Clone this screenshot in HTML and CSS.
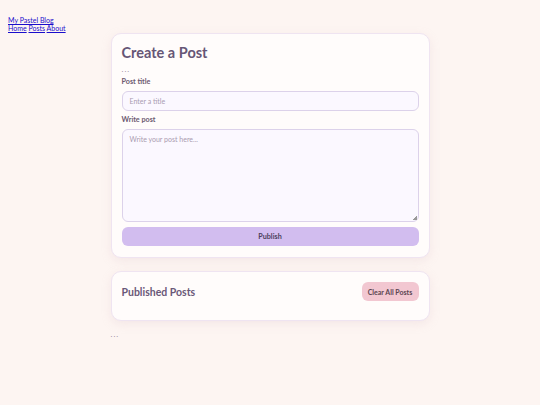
FILE: index.html
```html
<!DOCTYPE html>
<html>
<head>
<meta charset="utf-8">
<link rel="stylesheet" href="styles.css">
</head>
<body>
<header class="site-header">
  <div class="brand"><a href="#">My Pastel Blog</a></div>
  <nav class="nav"><a href="#">Home</a> <a href="#">Posts</a> <a href="#">About</a></nav>
</header>
<main class="main">
  <section class="card create">
    <h1 class="title">Create a Post</h1>
    <div class="dots">...</div>
    <label class="label">Post title</label>
    <div class="input">Enter a title</div>
    <label class="label">Write post</label>
    <div class="textarea">Write your post here...<span class="grip"></span></div>
    <button class="publish">Publish</button>
  </section>
  <section class="card published">
    <h2 class="sub">Published Posts</h2>
    <button class="clear">Clear All Posts</button>
  </section>
  <div class="dots bottom">...</div>
</main>
</body>
</html>
```
FILE: styles.css
```css
* { box-sizing: border-box; }
html, body { margin: 0; }
body {
  background: #fdf5f2;
  font-family: "Lato", "DejaVu Sans", sans-serif;
  padding: 16px 8px 0 8px;
}
.site-header { font-size: 7px; line-height: 8px; }
.site-header a { color: #1a0dcc; }
.main { width: 319px; margin: 1px auto 0 auto; display: flex; flex-direction: column; }
.card {
  background: #fffcfb;
  border: 1px solid #efe4f1;
  border-radius: 10px;
  box-shadow: 0 3px 10px rgba(220, 190, 200, 0.25);
  padding: 9px 10px 11px 10px;
}
.create { display: flex; flex-direction: column; }
.title {
  margin: 0;
  font-size: 14.5px;
  line-height: 19px;
  color: #665676;
  font-weight: 700;
}
.dots { color: #9c8f9c; font-size: 8px; line-height: 8px; letter-spacing: 1px; margin-top: 3px; }
.label {
  font-size: 7.2px;
  font-weight: 700;
  color: #6c5a70;
  margin-top: 4px;
  line-height: 10px;
}
.input, .textarea {
  background: #fbf8ff;
  border: 1px solid #dcd2ea;
  border-radius: 6px;
  font-size: 7px;
  color: #a99bb0;
  padding: 0 7px;
}
.input { height: 20px; line-height: 18px; margin-top: 4px; }
.textarea { height: 93px; margin-top: 4px; padding-top: 4px; line-height: 10px; position: relative; }
.grip {
  position: absolute; right: 1px; bottom: 1px; width: 4px; height: 4px;
  background: linear-gradient(135deg, transparent 50%, #999 50%);
}
.publish {
  margin-top: 5px;
  height: 19px;
  border: none;
  border-radius: 6px;
  background: #d2bdef;
  color: #4c3d5c;
  font-family: inherit;
  font-size: 7.2px;
  font-weight: 700;
}
.published {
  margin-top: 13px;
  height: 50px;
  padding-top: 10px;
  display: flex;
  justify-content: space-between;
  align-items: flex-start;
}
.sub { margin: 3px 0 0 0; font-size: 10.5px; line-height: 14px; color: #6a5878; font-weight: 700; }
.clear {
  border: none; border-radius: 6px; background: #f2c7d1; color: #5a4550;
  font-family: inherit; font-size: 7px; font-weight: 700;
  height: 19px; width: 57px; padding: 0;
}
.bottom { margin-top: 9px; }
```
